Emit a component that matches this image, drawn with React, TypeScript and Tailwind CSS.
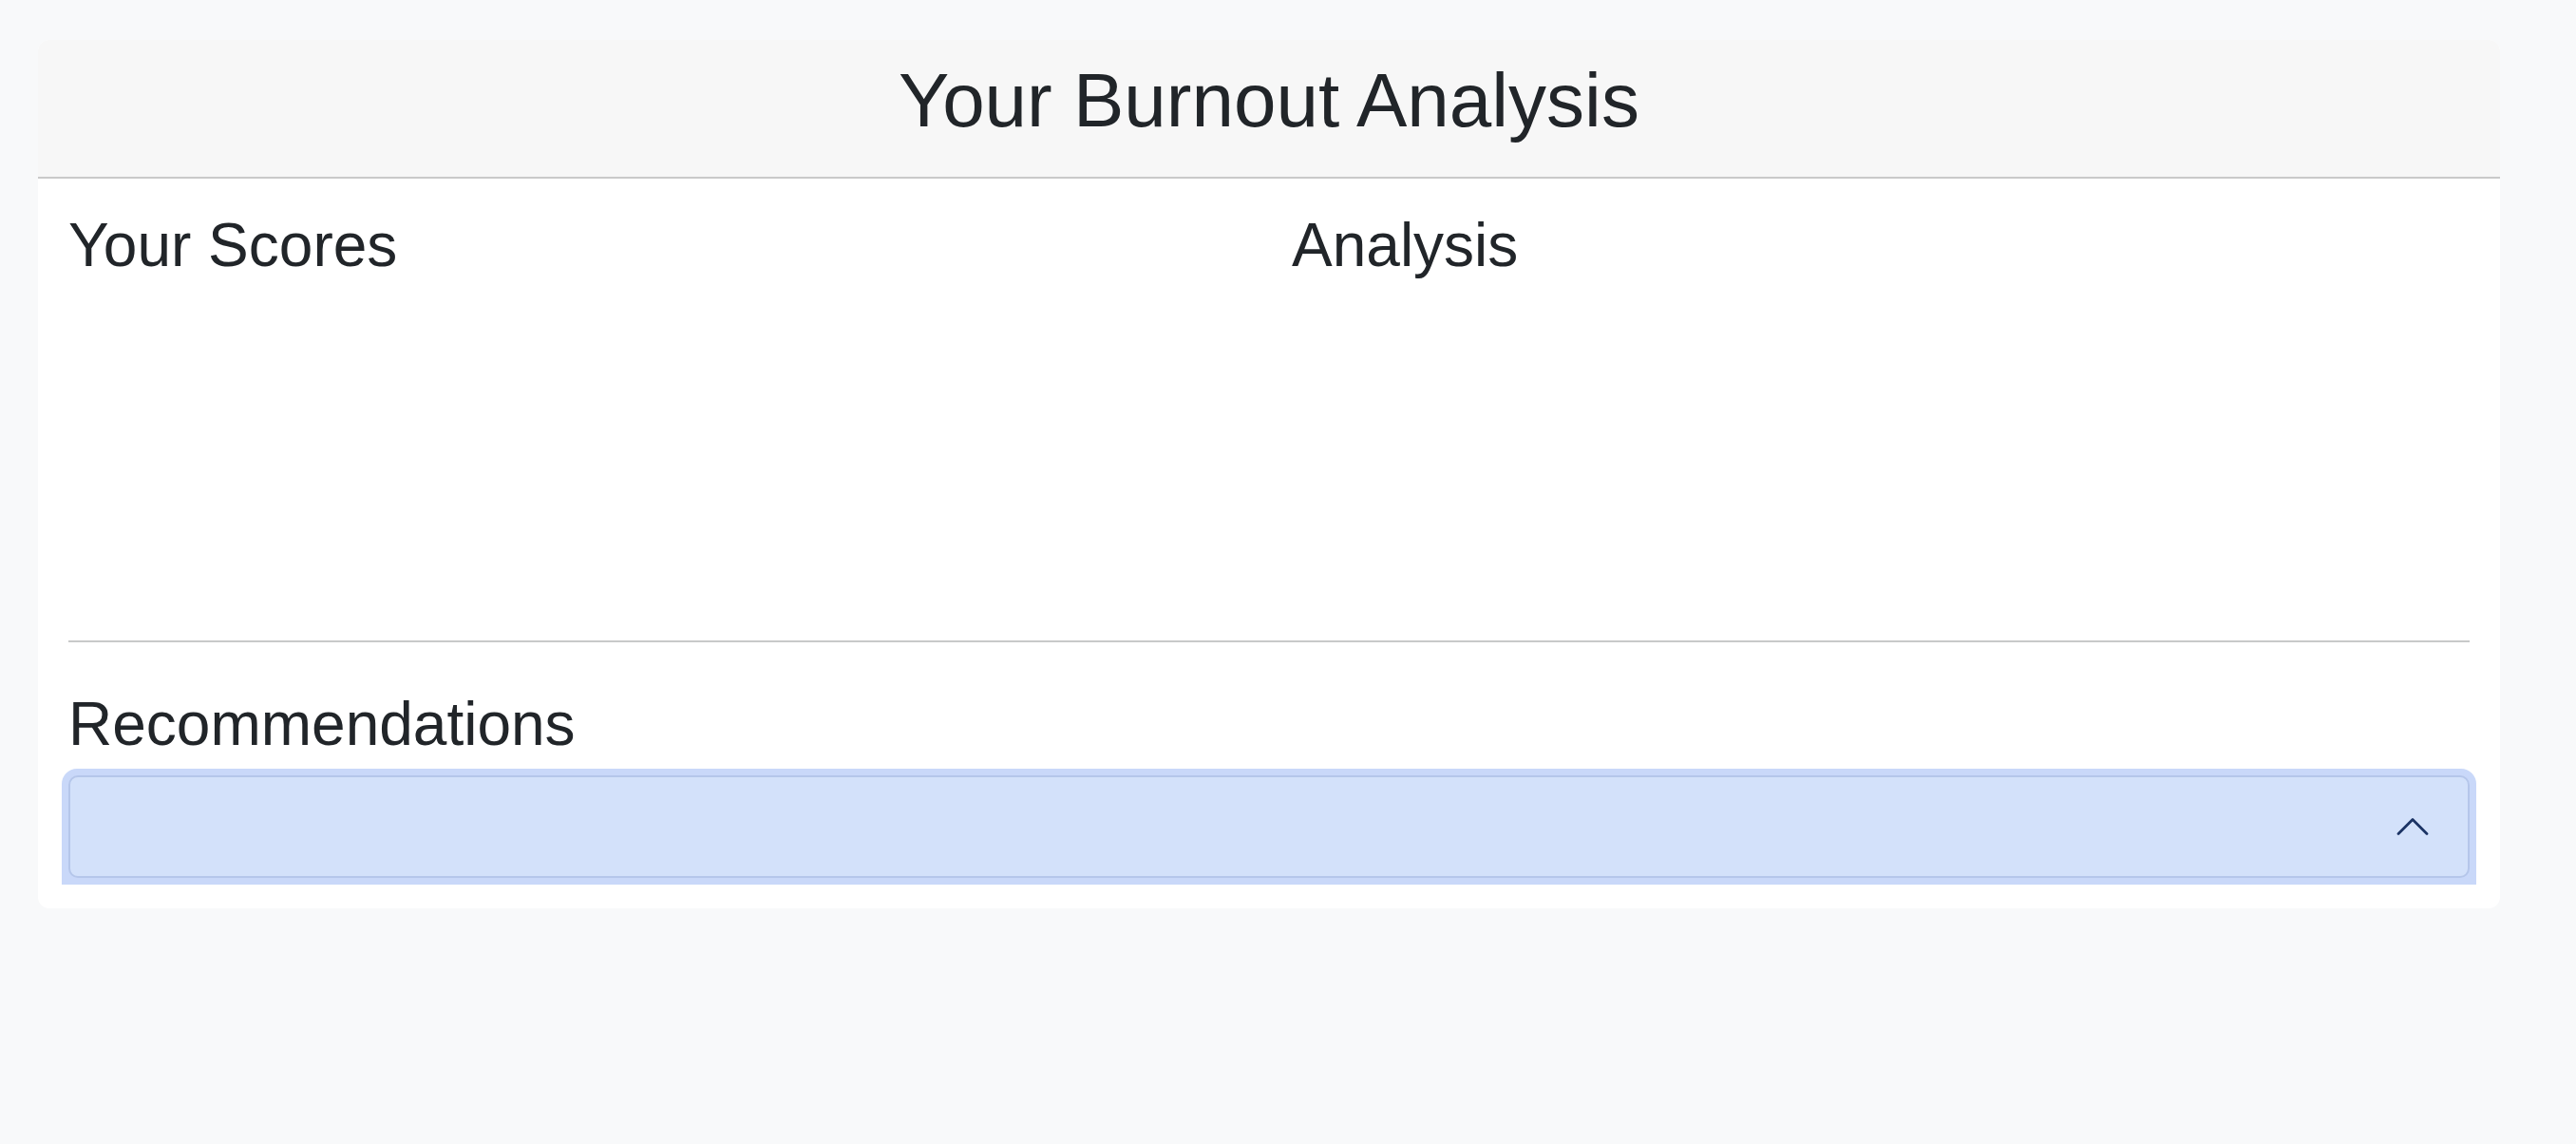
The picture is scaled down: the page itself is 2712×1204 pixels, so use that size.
import React from "react";

const font = { fontFamily: '"Liberation Sans", Arial, sans-serif' };

function ChevronUp() {
  return (
    <svg
      viewBox="0 0 16 16"
      className="h-[40px] w-[40px]"
      fill="none"
      stroke="#1b3364"
      strokeWidth={1.1}
      strokeLinecap="round"
      strokeLinejoin="round"
    >
      <path d="M2 11L8 5L14 11" />
    </svg>
  );
}

export default function App() {
  return (
    <div className="min-h-[1204px] bg-[#f8f9fa] pt-[42px] text-[#212529]" style={font}>
      <div className="ml-[40px] w-[2592px] overflow-hidden rounded-[12px] bg-white">
        {/* header */}
        <div className="border-b-2 border-[#c9c9c9] bg-[#f7f7f7] pt-[16px] pb-[32px] text-center">
          <h1 className="text-[80px] leading-[96px] font-normal">Your Burnout Analysis</h1>
        </div>

        {/* body */}
        <div className="p-[32px]">
          <div className="grid h-[422px] grid-cols-2 gap-[48px]">
            <div>
              <h3 className="text-[64px] leading-[77px] font-normal">Your Scores</h3>
            </div>
            <div>
              <h3 className="text-[64px] leading-[77px] font-normal">Analysis</h3>
            </div>
          </div>

          <hr className="mt-[32px] border-0 border-t-2 border-[#c8c9c9]" />

          <h3 className="mt-[48px] mb-[15px] text-[64px] leading-[77px] font-normal">Recommendations</h3>

          <div className="-mx-[7px] -my-[7px] rounded-t-[16px] bg-[#c9d8f9] p-[7px]">
            <button className="flex h-[108px] w-full items-center justify-end rounded-[10px] border-2 border-[#b5c6ea] bg-[#d3e1fa] pr-[38px]">
              <ChevronUp />
            </button>
          </div>
        </div>
      </div>
    </div>
  );
}
